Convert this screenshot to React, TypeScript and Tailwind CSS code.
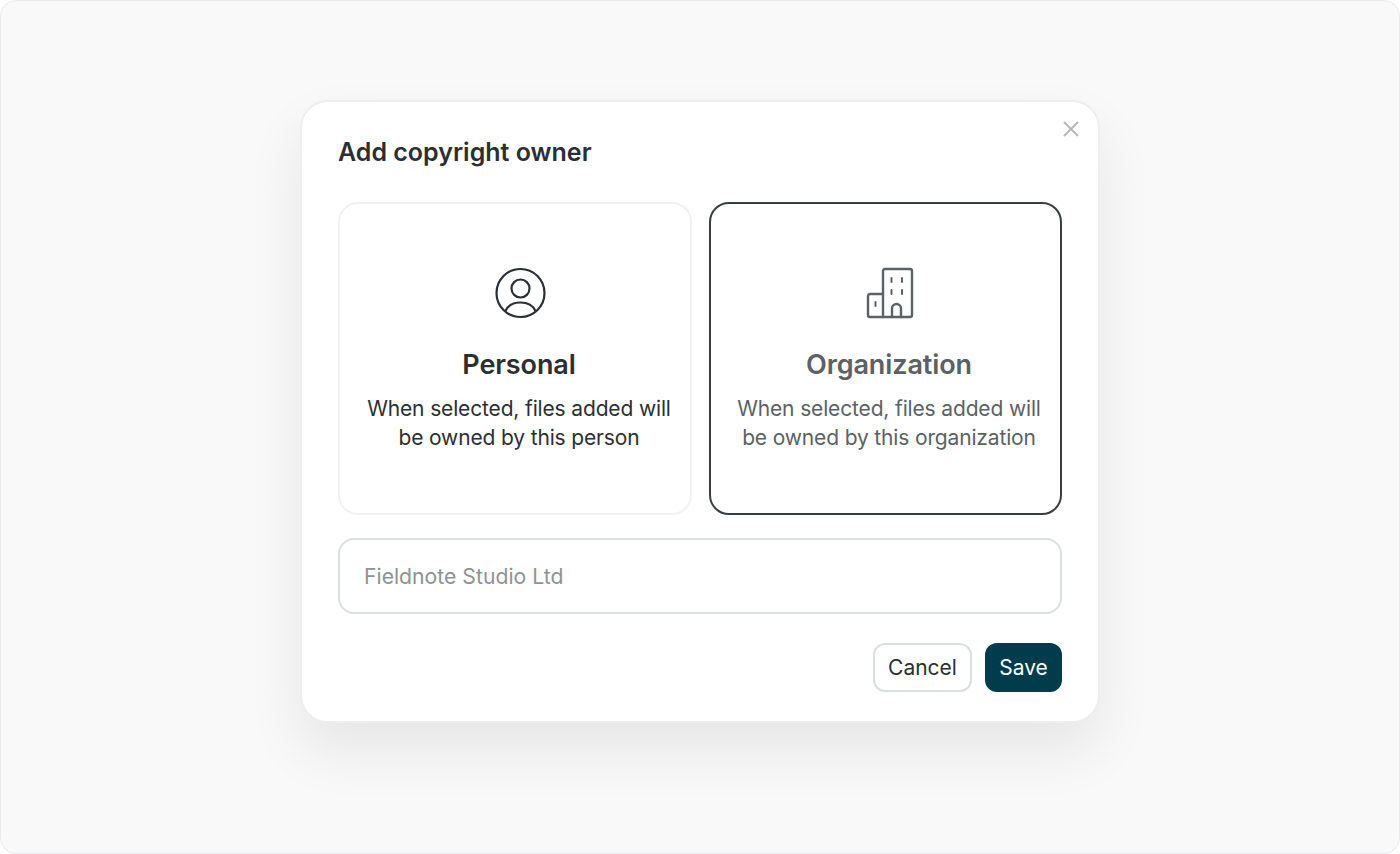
function PersonIcon() {
  return (
    <svg width="52" height="52" viewBox="0 0 52 52" fill="none" stroke="#2b2f33" strokeWidth="2.2" className="translate-x-[1px]">
      <circle cx="26.500" cy="26" r="24" />
      <circle cx="26.500" cy="21.500" r="9" />
      <path d="M11.500 44c2.500-5.500 8.500-8.500 15-8.500s12.500 3 15 8.500" />
    </svg>
  )
}

function BuildingIcon() {
  return (
    <svg width="48" height="52" viewBox="0 0 48 52" fill="none" stroke="#5b6166" strokeWidth="2.4" strokeLinejoin="round" strokeLinecap="round" className="translate-x-[1px]">
      <path d="M17 50V4a2 2 0 0 1 2-2h25a2 2 0 0 1 2 2v44a2 2 0 0 1-2 2H17Z" />
      <path d="M17 27H4a2 2 0 0 0-2 2v19a2 2 0 0 0 2 2h13" />
      <path d="M25.500 11v4M36 11v4M25.500 23v4M36 23v4M9.500 35v4" strokeWidth="2" />
      <path d="M26 50v-8.500a4.500 4.500 0 0 1 9 0V50" />
    </svg>
  )
}

function OptionCard({ icon, title, lines, selected }: { icon: React.ReactNode; title: string; lines: string[]; selected?: boolean }) {
  return (
    <div className={`flex-1 h-[313px] rounded-[20px] bg-white flex flex-col items-center pt-[63px] ${selected ? 'pl-[7px] border-2 border-[#3a3e42] text-[#5b6166]' : 'pl-[8px] border-2 border-[#f0f1f2] text-[#2b2f33]'}`}>
      <div className="h-[52px] flex items-center justify-center">{icon}</div>
      <h2 className="mt-[28px] text-[27px] leading-[36px] font-semibold tracking-[-0.1px]">{title}</h2>
      <p className="mt-[11px] text-[21px] leading-[29px] tracking-[-0.15px] text-center whitespace-nowrap">
        {lines[0]}
        <br />
        {lines[1]}
      </p>
    </div>
  )
}

export default function App() {
  return (
    <div className="h-[854px] w-[1400px] bg-[#f9f9f9] border border-[#e8eaeb] rounded-[16px] pt-[99px] flex justify-center items-start font-['Inter',sans-serif]">
      <div className="relative w-[800px] h-[623px] bg-white rounded-[28px] border-2 border-[#eceeef] px-[36px] pt-[32px] shadow-[0_28px_56px_rgba(0,0,0,0.08)]">
        <h1 className="text-[25px] leading-[36px] font-semibold text-[#2b2f33]">Add copyright owner</h1>
        <button className="absolute right-[17px] top-[17px] text-[#b4b8ba]" aria-label="Close">
          <svg width="20" height="20" viewBox="0 0 20 20" fill="none" stroke="currentColor" strokeWidth="2">
            <path d="M3 3l14 14M17 3 3 17" />
          </svg>
        </button>
        <div className="mt-[32px] flex gap-[17px]">
          <OptionCard
            icon={<PersonIcon />}
            title="Personal"
            lines={['When selected, files added will', 'be owned by this person']}
          />
          <OptionCard
            selected
            icon={<BuildingIcon />}
            title="Organization"
            lines={['When selected, files added will', 'be owned by this organization']}
          />
        </div>
        <div className="mt-[23px] h-[76px] rounded-[16px] border-2 border-[#dcdfe0] flex items-center pl-[24px] pt-[2px] text-[21.2px] text-[#8e9295]">
          Fieldnote Studio Ltd
        </div>
        <div className="mt-[29px] flex justify-end gap-[13px]">
          <button className="w-[99px] h-[49px] rounded-[12px] border-2 border-[#dcdfe0] bg-white text-[21px] text-[#2b2f33]">Cancel</button>
          <button className="w-[77px] h-[49px] rounded-[12px] bg-[#003c4b] text-[21px] text-white">Save</button>
        </div>
      </div>
    </div>
  )
}
